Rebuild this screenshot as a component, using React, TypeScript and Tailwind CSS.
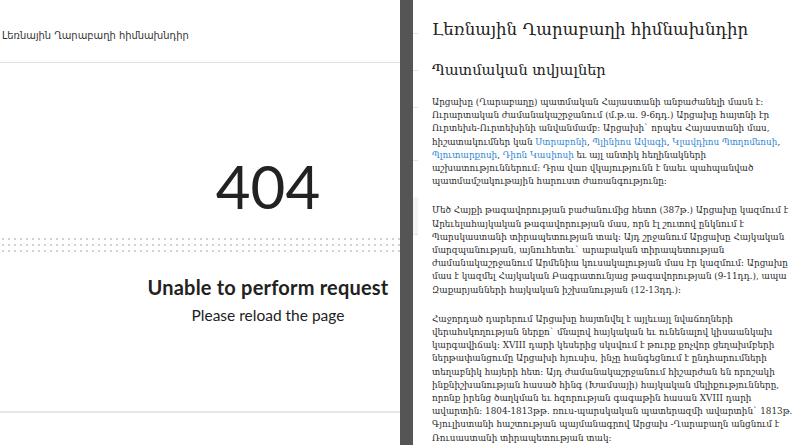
import React from "react";

type Seg = { t: string; link?: boolean };

const PARAS: Seg[][][] = [
  [
    [{ t: "Արցախը (Ղարաբաղը) պատմական Հայաստանի անբաժանելի մասն է:" }],
    [{ t: "Ուրարտական ժամանակաշրջանում (մ.թ.ա. 9-6դդ.) Արցախը հայտնի էր" }],
    [{ t: "Ուրտեխե-Ուրտեխինի անվանմամբ: Արցախի` որպես Հայաստանի մաս," }],
    [
      { t: "հիշատակումներ կան " },
      { t: "Ստրաբոնի", link: true },
      { t: ", " },
      { t: "Պլինիոս Ավագի", link: true },
      { t: ", " },
      { t: "Կլավդիոս Պտղոմեոսի", link: true },
      { t: "," },
    ],
    [
      { t: "Պլուտարքոսի", link: true },
      { t: ", " },
      { t: "Դիոն Կասիոսի", link: true },
      { t: " եւ այլ անտիկ հեղինակների" },
    ],
    [{ t: "աշխատություններում: Դրա վառ վկայությունն է նաեւ պահպանված" }],
    [{ t: "պատմամշակութային հարուստ ժառանգությունը:" }],
  ],
  [
    [{ t: "Մեծ Հայքի թագավորության բաժանումից հետո (387թ.) Արցախը կազմում է" }],
    [{ t: "Արեւելահայկական թագավորության մաս, որն էլ շուտով ընկնում է" }],
    [{ t: "Պարսկաստանի տիրապետության տակ: Այդ շրջանում Արցախը Հայկական" }],
    [{ t: "մարզպանության, այնուհետեւ` արաբական տիրապետության" }],
    [{ t: "ժամանակաշրջանում Արմենիա կուսակալության մաս էր կազմում: Արցախը" }],
    [{ t: "մաս է կազմել Հայկական Բագրատունյաց թագավորության (9-11դդ.), ապա" }],
    [{ t: "Զաքարյանների հայկական իշխանության (12-13դդ.):" }],
  ],
  [
    [{ t: "Հաջորդած դարերում Արցախը հայտնվել է այլեւայլ նվաճողների" }],
    [{ t: "վերահսկողության ներքո` մնալով հայկական եւ ունենալով կիսաանկախ" }],
    [{ t: "կարգավիճակ: XVIII դարի կեսերից սկսվում է թուրք քոչվոր ցեղախմբերի" }],
    [{ t: "ներթափանցումը Արցախի հյուսիս, ինչը հանգեցնում է ընդհարումների" }],
    [{ t: "տեղաբնիկ հայերի հետ: Այդ ժամանակաշրջանում հիշարժան են որոշակի" }],
    [{ t: "ինքնիշխանության հասած հինգ (Խամսայի) հայկական մելիքությունները," }],
    [{ t: "որոնք իրենց ծաղկման եւ հզորության գագաթին հասան XVIII դարի" }],
    [{ t: "ավարտին: 1804-1813թթ. ռուս-պարսկական պատերազմի ավարտին` 1813թ." }],
    [{ t: "Գյուլիստանի հաշտության պայմանագրով Արցախ -Ղարաբաղն անցնում է" }],
    [{ t: "Ռուսաստանի տիրապետության տակ:" }],
  ],
];

function ErrorPage() {
  return (
    <div className="w-[400px] shrink-0 overflow-hidden">
      <div className="flex h-[445px] w-[536px] flex-col">
        <div className="flex h-[63px] items-center border-b border-[#e2e2e2] pl-[2px] pt-[10px] font-['DejaVu_Sans_Condensed','DejaVu_Sans',sans-serif] text-[11px] text-[#333] [font-stretch:condensed]">
          Լեռնային Ղարաբաղի հիմնախնդիր
        </div>
        <div className="flex h-[350px] flex-col items-center border-b-2 border-[#e8e8e8] font-['Lato',sans-serif] text-[#222]">
          <div className="mt-[93px] text-[60px] leading-none">404</div>
          <div className="mt-[20px] h-[18px] w-full bg-[radial-gradient(circle,#d2d2d2_1px,transparent_1.4px)] bg-[length:6px_6px]" />
          <div className="mt-[23px] text-[20px] font-bold leading-none tracking-[0.2px]">Unable to perform request</div>
          <div className="mt-[11px] text-[15.5px] leading-none">Please reload the page</div>
        </div>
      </div>
    </div>
  );
}

function Article() {
  return (
    <div className="flex-1 pl-[14px] pt-[18px] font-['DejaVu_Serif',serif] text-[#222]">
      <h1 className="text-[16.6px] leading-[24px]">Լեռնային Ղարաբաղի հիմնախնդիր</h1>
      <h2 className="mt-[18px] text-[14.6px] leading-[20px]">Պատմական տվյալներ</h2>
      <div className="mt-[15px] font-['DejaVu_Serif_Condensed','DejaVu_Serif',serif] text-[9.8px] leading-[13.2px] text-[#2b2b2b] [font-stretch:condensed]">
        {PARAS.map((p, i) => (
          <p key={i} className="mb-[16px] whitespace-nowrap">
            {p.map((line, j) => (
              <span key={j} className="block">
                {line.map((s, k) =>
                  s.link ? (
                    <span key={k} className="text-[#2f86d4]">{s.t}</span>
                  ) : (
                    <span key={k}>{s.t}</span>
                  )
                )}
              </span>
            ))}
          </p>
        ))}
      </div>
    </div>
  );
}

export default function App() {
  return (
    <div className="flex h-[445px] w-[800px] overflow-hidden bg-white">
      <ErrorPage />
      <div className="w-[13px] shrink-0 bg-[#555555]" />
      <div className="flex w-[5px] shrink-0 flex-col">
        <div className="h-[34px] border-b border-[#e4e4e4]" />
        <div className="h-[37px] border-b border-[#e4e4e4]" />
        <div className="h-[37px] border-b border-[#e4e4e4]" />
        <div className="h-[53px] border-b border-[#e4e4e4]" />
        <div className="mt-[36px] h-[38px] border-b border-[#e4e4e4] bg-[#f4f4f4]" />
      </div>
      <Article />
    </div>
  );
}
